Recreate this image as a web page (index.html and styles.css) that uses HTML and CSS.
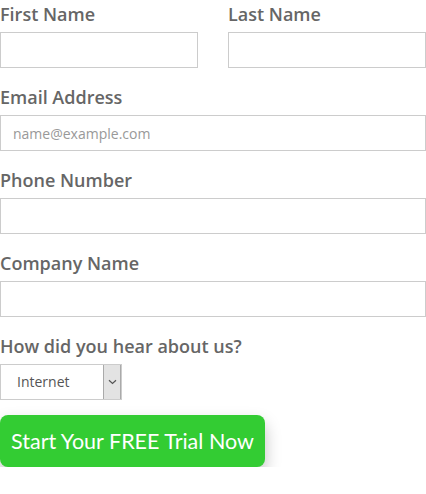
FILE: index.html
```html
<!DOCTYPE html>
<html>
<head>
<meta charset="utf-8">
<link rel="stylesheet" href="styles.css">
</head>
<body>
<form class="form">
  <div class="row">
    <div class="field">
      <label class="label">First Name</label>
      <input class="input" type="text">
    </div>
    <div class="field">
      <label class="label">Last Name</label>
      <input class="input" type="text">
    </div>
  </div>
  <div class="field">
    <label class="label">Email Address</label>
    <input class="input" type="text" placeholder="name@example.com">
  </div>
  <div class="field">
    <label class="label">Phone Number</label>
    <input class="input" type="text">
  </div>
  <div class="field">
    <label class="label">Company Name</label>
    <input class="input" type="text">
  </div>
  <div class="field">
    <label class="label">How did you hear about us?</label>
    <div class="select">
      <span class="select-value">Internet</span>
      <span class="select-arrow">
        <svg width="9" height="6" viewBox="0 0 9 6"><path d="M1 1.2 L4.5 4.5 L8 1.2" fill="none" stroke="#555" stroke-width="1.2"/></svg>
      </span>
    </div>
  </div>
  <button class="btn" type="button">Start Your FREE Trial Now</button>
</form>
</body>
</html>
```
FILE: styles.css
```css
html, body {
  margin: 0;
  padding: 0;
  background: #fff;
}
.form {
  width: 426px;
  font-family: "Open Sans", sans-serif;
  display: flex;
  flex-direction: column;
}
.row {
  display: flex;
  gap: 30px;
}
.row .field {
  flex: 1;
}
.field {
  display: flex;
  flex-direction: column;
  margin-bottom: 15px;
}
.label {
  font-size: 18px;
  font-weight: 600;
  color: #666;
  line-height: 24px;
  height: 24px;
  margin-top: 2px;
  margin-bottom: 6px;
}
.input {
  box-sizing: border-box;
  height: 36px;
  width: 100%;
  border: 1px solid #ccc;
  margin: 0;
  padding: 0 12px;
  font-family: "Open Sans", sans-serif;
  font-size: 14px;
  color: #555;
  background: #fff;
  outline: none;
}
.input::placeholder {
  color: #999;
}
.select {
  box-sizing: border-box;
  width: 122px;
  height: 36px;
  border: 1px solid #ccc;
  display: flex;
  background: #fff;
}
.select-value {
  flex: 1;
  font-size: 14px;
  color: #555;
  line-height: 34px;
  padding-left: 16px;
}
.select-arrow {
  width: 16px;
  background: #e3e3e3;
  border-left: 1px solid #aaa;
  border-right: 1px solid #aaa;
  display: flex;
  align-items: center;
  justify-content: center;
}
.btn {
  align-self: flex-start;
  margin-top: 0;
  width: 265px;
  height: 52px;
  border: none;
  border-radius: 8px;
  background: #33cc33;
  color: #fff;
  font-family: Lato, sans-serif;
  font-size: 21.5px;
  padding: 0;
  box-shadow: 0 8px 16px rgba(0,0,0,0.25);
}
```
